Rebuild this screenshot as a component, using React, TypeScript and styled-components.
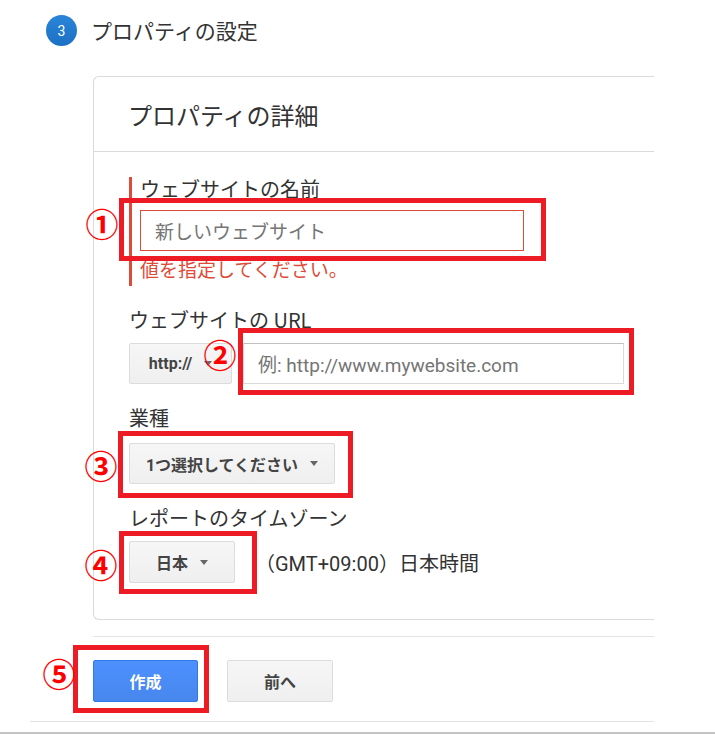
import React from 'react';
import styled, { createGlobalStyle } from 'styled-components';

const GlobalStyle = createGlobalStyle`
  html, body {
    margin: 0;
    padding: 0;
    background: #fff;
  }
  body {
    font-family: Roboto, "Noto Sans CJK JP", sans-serif;
    color: #333;
  }
  * {
    box-sizing: border-box;
  }
`;

const Page = styled.div`
  width: 715px;
  height: 734px;
  overflow: hidden;
  position: relative;
`;

const StepHeader = styled.div`
  display: flex;
  align-items: center;
  gap: 14px;
  padding: 15px 0 0 46px;
`;

const StepBadge = styled.div`
  width: 31px;
  height: 31px;
  border-radius: 50%;
  background: linear-gradient(#2a85d8, #1b70c4);
  color: #fff;
  font-size: 14px;
  display: flex;
  align-items: center;
  justify-content: center;
`;

const StepTitle = styled.div`
  font-family: "Noto Sans CJK JP", sans-serif;
  font-size: 21px;
  color: #333;
  line-height: 31px;
`;

const Card = styled.div`
  margin: 30px 0 0 93px;
  width: 561px;
  border: 1px solid #dadade;
  border-right: none;
  border-radius: 6px 0 0 6px;
`;

const CardHeader = styled.div`
  height: 75px;
  display: flex;
  align-items: center;
  padding-left: 34px;
  border-bottom: 1px solid #dadade;
  font-family: "Noto Sans CJK JP", sans-serif;
  font-size: 24px;
  color: #333;
`;

const CardBody = styled.div`
  padding: 25px 0 36px 35px;
`;

const Field = styled.div`
  margin-top: 22px;
`;

const ErrorField = styled.div`
  border-left: 3px solid #dd4b39;
  padding: 0 0 5px 8px;
`;

const Label = styled.div`
  font-family: "Noto Sans CJK JP", sans-serif;
  font-size: 20px;
  line-height: 24px;
  color: #333;
`;

const ControlRow = styled.div<{ $gap?: number; $mt?: number }>`
  position: relative;
  display: flex;
  align-items: center;
  gap: ${({ $gap }) => $gap ?? 11}px;
  margin-top: ${({ $mt }) => $mt ?? 11}px;
`;

const TextInput = styled.div<{ $width: number; $error?: boolean }>`
  width: ${({ $width }) => $width}px;
  height: 41px;
  display: flex;
  align-items: center;
  padding-left: 14px;
  background: #fff;
  border: 1px solid ${({ $error }) => ($error ? '#dd4b39' : '#d9d9d9')};
  border-top-color: ${({ $error }) => ($error ? '#dd4b39' : '#c0c0c0')};
  color: #757575;
  font-size: 19px;
  font-family: Roboto, "Noto Sans CJK JP", sans-serif;
`;

const ErrorText = styled.div`
  margin-top: 6px;
  font-family: "Noto Sans CJK JP", sans-serif;
  font-size: 19px;
  line-height: 24px;
  color: #dd4b39;
`;

const GreyButton = styled.div<{ $width: number; $height?: number }>`
  width: ${({ $width }) => $width}px;
  height: ${({ $height }) => $height ?? 41}px;
  display: flex;
  align-items: center;
  justify-content: center;
  gap: 12px;
  background: linear-gradient(#f6f6f6, #efefef);
  border: 1px solid #dcdcdc;
  border-radius: 2px;
  color: #444;
  font-weight: bold;
  font-size: 16px;
  font-family: Roboto, "Noto Sans CJK JP", sans-serif;
`;

const BlueButton = styled(GreyButton)`
  background: linear-gradient(#4d90fe, #4787ed);
  border-color: #3079ed;
  color: #fff;
`;

const Caret = styled.span`
  width: 0;
  height: 0;
  border-left: 4px solid transparent;
  border-right: 4px solid transparent;
  border-top: 5px solid #666;
`;

const ZoneText = styled.div`
  font-size: 20px;
  color: #333;
  font-family: Roboto, "Noto Sans CJK JP", sans-serif;
`;

const Divider = styled.div<{ $left: number; $mt: number }>`
  margin: ${({ $mt }) => $mt}px 61px 0 ${({ $left }) => $left}px;
  height: 1px;
  background: #e3e3e3;
`;

const Actions = styled.div`
  position: relative;
  display: flex;
  gap: 29px;
  margin: 23px 0 0 93px;
`;

const BottomRule = styled.div`
  margin-top: 10px;
  height: 2px;
  background: #c4c4c4;
`;

/* red annotation markers laid over the form */
const Mark = styled.div<{ $l: number; $t: number; $w: number; $h: number }>`
  position: absolute;
  left: ${({ $l }) => $l}px;
  top: ${({ $t }) => $t}px;
  width: ${({ $w }) => $w}px;
  height: ${({ $h }) => $h}px;
  border: 5px solid #ed1c24;
  pointer-events: none;
`;

const Num = styled.div<{ $l: number; $t: number }>`
  position: absolute;
  left: ${({ $l }) => $l}px;
  top: ${({ $t }) => $t}px;
  width: 34px;
  height: 30px;
  display: flex;
  align-items: center;
  justify-content: center;
  font-family: "Noto Sans CJK JP", sans-serif;
  font-weight: bold;
  font-size: 33px;
  line-height: 30px;
  color: #f00;
`;

const App: React.FC = () => {
  return (
    <Page>
      <GlobalStyle />
      <StepHeader>
        <StepBadge>3</StepBadge>
        <StepTitle>プロパティの設定</StepTitle>
      </StepHeader>

      <Card>
        <CardHeader>プロパティの詳細</CardHeader>
        <CardBody>
          <ErrorField>
            <Label>ウェブサイトの名前</Label>
            <ControlRow $mt={9}>
              <TextInput $width={384} $error>新しいウェブサイト</TextInput>
              <Mark $l={-21} $t={-12} $w={427} $h={63} />
              <Num $l={-55} $t={-2}>①</Num>
            </ControlRow>
            <ErrorText>値を指定してください。</ErrorText>
          </ErrorField>

          <Field>
            <Label>ウェブサイトの URL</Label>
            <ControlRow>
              <GreyButton $width={103}>
                http://
                <Caret />
              </GreyButton>
              <TextInput $width={381}>例: http://www.mywebsite.com</TextInput>
              <Mark $l={109} $t={-15} $w={396} $h={67} />
              <Num $l={74} $t={-4}>②</Num>
            </ControlRow>
          </Field>

          <Field>
            <Label>業種</Label>
            <ControlRow $mt={13}>
              <GreyButton $width={206}>
                1つ選択してください
                <Caret />
              </GreyButton>
              <Mark $l={-11} $t={-12} $w={235} $h={67} />
              <Num $l={-45} $t={7}>③</Num>
            </ControlRow>
          </Field>

          <Field>
            <Label>レポートのタイムゾーン</Label>
            <ControlRow $gap={20}>
              <GreyButton $width={106} $height={42}>
                日本
                <Caret />
              </GreyButton>
              <ZoneText>（GMT+09:00）日本時間</ZoneText>
              <Mark $l={-10} $t={-10} $w={138} $h={63} />
              <Num $l={-45} $t={8}>④</Num>
            </ControlRow>
          </Field>
        </CardBody>
      </Card>

      <Divider $left={93} $mt={16} />

      <Actions>
        <BlueButton $width={105} $height={42}>作成</BlueButton>
        <GreyButton $width={106} $height={42}>前へ</GreyButton>
        <Mark $l={-20} $t={-15} $w={136} $h={68} />
        <Num $l={-51} $t={-2}>⑤</Num>
      </Actions>

      <Divider $left={30} $mt={19} />
      <BottomRule />
    </Page>
  );
};

export default App;
